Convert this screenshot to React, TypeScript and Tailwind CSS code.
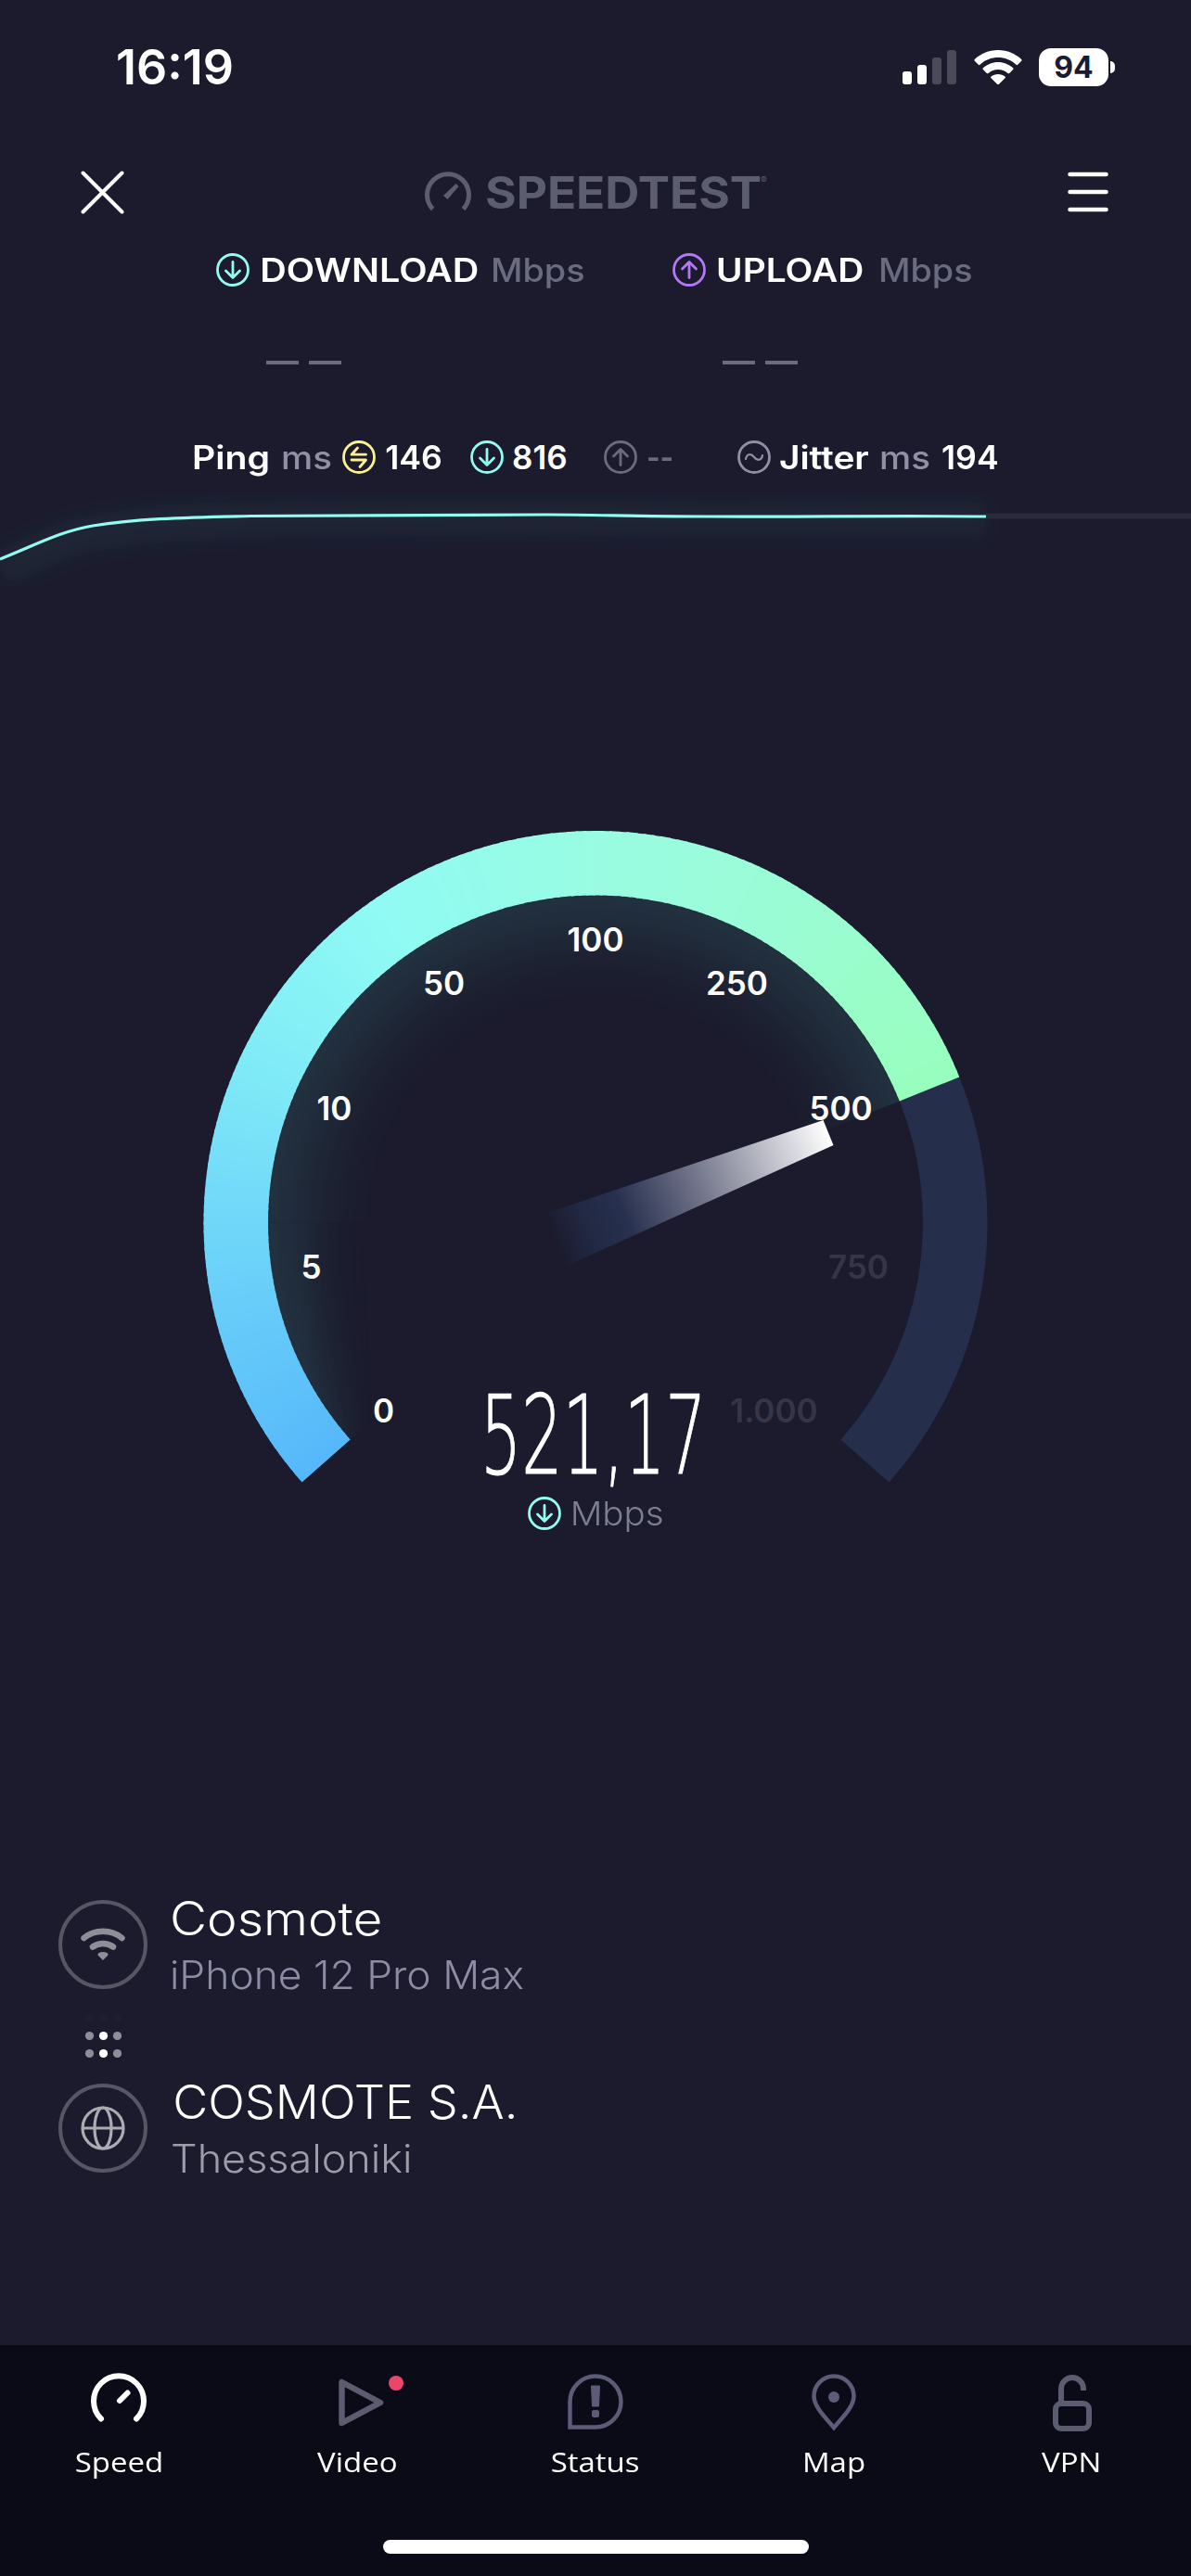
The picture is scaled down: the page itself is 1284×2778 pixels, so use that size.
import React from "react";

const arrowDown = "M18 9.500V26M10.500 19L18 26.500L25.500 19";
const arrowUp = "M18 26.500V10M10.500 17L18 9.500L25.500 17";
const sync = "M16.500 8L10 15.200H25.500M19 28.500L25.500 21H10";
const wave = "M9 20C10 14 15 14 18 18S26 22 27 16";

function RoundIcon({ d, color, w = 2.8 }: { d: string; color: string; w?: number }) {
  return (
    <svg width="36" height="36" viewBox="0 0 36 36" fill="none" stroke={color} strokeLinecap="round" strokeLinejoin="round" className="shrink-0">
      <circle cx="18" cy="18" r="16.500" strokeWidth="2.800" />
      <path d={d} strokeWidth={w} />
    </svg>
  );
}

/* Text with a fixed advance box, so that neighbours stay in place. */
function T({ children, w, className = "", k = 1 }: { children: React.ReactNode; w: number; className?: string; k?: number }) {
  return (
    <span className="block shrink-0 whitespace-nowrap" style={{ width: w }}>
      <span className={"inline-block origin-left " + className} style={{ transform: `scaleX(${k})` }}>{children}</span>
    </span>
  );
}

const CX = 422.5;
const CY = 422.5;
const pt = (r: number, deg: number) => {
  const a = (deg * Math.PI) / 180;
  return `${(CX + r * Math.cos(a)).toFixed(2)} ${(CY - r * Math.sin(a)).toFixed(2)}`;
};
/* Ring sector running clockwise from angle a to angle b (degrees, counter-clockwise positive). */
const sector = (a: number, b: number, r1 = 353, r2 = 422.5) => {
  const big = a - b > 180 ? 1 : 0;
  return `M${pt(r2, a)}A${r2} ${r2} 0 ${big} 1 ${pt(r2, b)}L${pt(r1, b)}A${r1} ${r1} 0 ${big} 0 ${pt(r1, a)}Z`;
};
const START = 221.5;
const VALUE = 21.8;
const END = -41.5;
const stops: [number, number[]][] = [
  [221.5, [86, 184, 250]],
  [180, [112, 215, 249]],
  [155, [128, 235, 247]],
  [125, [144, 251, 244]],
  [90, [153, 252, 226]],
  [60, [154, 252, 213]],
  [21.8, [152, 254, 190]],
];
const colorAt = (a: number) => {
  for (let i = 1; i < stops.length; i++) {
    const [a0, c0] = stops[i - 1];
    const [a1, c1] = stops[i];
    if (a >= a1) {
      const t = (a0 - a) / (a0 - a1);
      return `rgb(${c0.map((v, j) => Math.round(v + (c1[j] - v) * t)).join(",")})`;
    }
  }
  return "rgb(152,254,190)";
};
const N = 160;
const slices = Array.from({ length: N }, (_, i) => {
  const step = (START - VALUE) / N;
  const a = START - i * step;
  return { d: sector(a, Math.max(VALUE, a - step - 0.4)), c: colorAt(a - step / 2) };
});

const marks: { t: string; x: number; y: number; dim?: boolean }[] = [
  { t: "0", x: 413, y: 1521 },
  { t: "5", x: 335, y: 1366 },
  { t: "10", x: 360, y: 1195 },
  { t: "50", x: 478, y: 1060 },
  { t: "100", x: 641.5, y: 1013 },
  { t: "250", x: 794, y: 1060 },
  { t: "500", x: 906, y: 1195 },
  { t: "750", x: 925, y: 1366, dim: true },
  { t: "1.000", x: 834, y: 1521, dim: true },
];

function Gauge() {
  return (
    <div className="relative mx-auto h-[710px] w-[846px]">
      <svg width="846" height="710" viewBox="-0.5 0 846 710" className="block">
        <defs>
          <radialGradient id="glow" gradientUnits="userSpaceOnUse" cx={CX} cy={CY} r="353">
            <stop offset="0.680" stopColor="#3c7f80" stopOpacity="0" />
            <stop offset="0.800" stopColor="#3c7f80" stopOpacity="0.060" />
            <stop offset="0.900" stopColor="#3c7f80" stopOpacity="0.150" />
            <stop offset="1" stopColor="#3c7f80" stopOpacity="0.230" />
          </radialGradient>
          <linearGradient id="fade" gradientUnits="userSpaceOnUse" x1="110" y1="0" x2="180" y2="0">
            <stop offset="0" stopColor="#fff" />
            <stop offset="1" stopColor="#000" />
          </linearGradient>
          <mask id="glowMask" maskUnits="userSpaceOnUse" x="0" y="0" width="846" height="710">
            <rect width="846" height="422.500" fill="#fff" />
            <rect y="422.500" width="846" height="288" fill="url(#fade)" />
          </mask>
          <linearGradient id="needle" gradientUnits="userSpaceOnUse" x1="378" y1="441" x2="674" y2="325">
            <stop offset="0" stopColor="#252f4d" stopOpacity="0" />
            <stop offset="0.130" stopColor="#232d4a" stopOpacity="0.800" />
            <stop offset="0.250" stopColor="#27304f" />
            <stop offset="0.500" stopColor="#6c6f85" />
            <stop offset="1" stopColor="#ffffff" />
          </linearGradient>
        </defs>
        <path d={sector(START, VALUE, 230, 353.500)} fill="url(#glow)" mask="url(#glowMask)" />
        <path d={sector(VALUE, END)} fill="#252e4b" />
        {slices.map((s, i) => (
          <path key={i} d={s.d} fill={s.c} />
        ))}
      </svg>
      {marks.map((m) => (
        <span
          key={m.t}
          className={"absolute -translate-x-1/2 -translate-y-1/2 text-[35px] leading-none font-semibold " + (m.dim ? "text-[#353547]" : "text-white")}
          style={{ left: m.x - 218.500, top: m.y - 896 }}
        >
          {m.t}
        </span>
      ))}
      <svg width="846" height="710" viewBox="-0.5 0 846 710" className="absolute inset-0">
        <path d="M367.500 413L668 312L679 339L389.500 470Z" fill="url(#needle)" />
      </svg>
      <div className="absolute top-[598px] left-[299px] w-[240px] whitespace-nowrap text-white">
        <span className="inline-block origin-left scale-x-[0.595] font-['DejaVu_Sans'] text-[117px] leading-[110px] font-extralight [-webkit-text-stroke:1.2px_#fff]">521,17</span>
      </div>
    </div>
  );
}

const GaugeIcon = () => (
  <svg width="64" height="64" viewBox="0 0 64 64" fill="none" stroke="#fff" strokeWidth="6" strokeLinecap="round">
    <path d="M13 50.500A27 27 0 1 1 51 50.500M33 31L41.500 22.500" />
  </svg>
);
const VideoIcon = () => (
  <div className="relative">
    <svg width="64" height="64" viewBox="0 0 64 64" fill="none" stroke="#5c5c70" strokeWidth="6.500" strokeLinejoin="round">
      <path d="M15.500 11V55L57 33Z" />
    </svg>
    <span className="absolute top-[4px] left-[66px] size-4 rounded-full bg-[#e9476a]" />
  </div>
);
const StatusIcon = () => (
  <svg width="64" height="64" viewBox="0 0 64 64" fill="none">
    <path d="M4.500 59.500V32A27.500 27.500 0 1 1 32 59.500Z" stroke="#5c5c78" strokeWidth="4.500" />
    <path d="M27.500 15H36.500L35.500 37H28.500Z" fill="#5c5c78" stroke="#5c5c78" strokeWidth="1" strokeLinejoin="round" />
    <rect x="28" y="41" width="8" height="8" rx="2" fill="#5c5c78" />
  </svg>
);
const MapIcon = () => (
  <svg width="64" height="64" viewBox="0 0 64 64" fill="none">
    <path d="M32 60C24 50 10.500 38 10.500 26A21.500 21.500 0 0 1 53.500 26C53.500 38 40 50 32 60Z" stroke="#5c5c78" strokeWidth="4.500" />
    <circle cx="32" cy="27" r="6" fill="#5c5c78" />
  </svg>
);
const VpnIcon = () => (
  <svg width="64" height="64" viewBox="0 0 64 64" fill="none" stroke="#5c5c70" strokeWidth="6">
    <rect x="14" y="34" width="36" height="27" rx="6" />
    <path d="M20 34V18A12 12 0 0 1 44 18V20" />
  </svg>
);

const tabs = [
  { label: "Speed", icon: <GaugeIcon /> },
  { label: "Video", icon: <VideoIcon /> },
  { label: "Status", icon: <StatusIcon /> },
  { label: "Map", icon: <MapIcon /> },
  { label: "VPN", icon: <VpnIcon /> },
];

function StatusBar() {
  return (
    <header className="flex h-[160px] items-start pt-[52px] pl-[125px]">
      <div className="w-[848px] text-[52px] leading-[42px] font-semibold">16:19</div>
      <svg width="58" height="42" viewBox="0 0 58 42" className="mr-[19px]">
        <rect x="0" y="25" width="10" height="14" rx="3" fill="#fff" />
        <rect x="16" y="18" width="10" height="21" rx="3" fill="#fff" />
        <rect x="32" y="10" width="10" height="29" rx="3" fill="#4a4a58" />
        <rect x="48" y="2" width="10" height="37" rx="3" fill="#4a4a58" />
      </svg>
      <svg width="52" height="42" viewBox="0 0 52 42" className="mr-[18px]" fill="#fff">
        <path d="M26 2C16 2 7 6 0.800 12Q0 13 0.800 13.800L4.800 17.800Q5.500 18.500 6.500 17.700C12 12.500 19 10 26 10S40 12.500 45.500 17.700Q46.500 18.500 47.200 17.800L51.200 13.800Q52 13 51.200 12C45 6 36 2 26 2Z" />
        <path d="M26 15C20 15 14 17.500 9.800 21.300Q9 22.200 9.800 23L13.800 27Q14.500 27.700 15.500 27C18.500 24.300 22 23 26 23S33.500 24.300 36.500 27Q37.500 27.700 38.200 27L42.200 23Q43 22.200 42.200 21.300C38 17.500 32 15 26 15Z" />
        <path d="M26 28C23 28 20.500 29 18.500 30.500Q17.500 31.400 18.500 32.300L25 38.700Q26 39.500 27 38.700L33.500 32.300Q34.500 31.400 33.500 30.500C31.500 29 29 28 26 28Z" />
      </svg>
      <div className="flex h-[41px] w-[75px] items-center justify-center rounded-[13px] bg-white text-[32px] leading-none font-bold text-[#1b1b2d]">94</div>
      <span className="mt-[14px] ml-[2px] h-[13px] w-[5px] rounded-r-full bg-white" />
    </header>
  );
}

function Host({ title, sub, subClass, icon }: { title: React.ReactNode; sub: React.ReactNode; subClass: string; icon: React.ReactNode }) {
  return (
    <div className="flex h-[104px]">
      <div className="mt-1 mr-[24px] flex size-24 shrink-0 items-center justify-center rounded-full border-4 border-[#565665]">{icon}</div>
      <div>
        <div className="h-[64px] text-[50px] leading-[49px] font-light text-white">{title}</div>
        <div className={"text-[42px] leading-[42px] font-light " + subClass}>{sub}</div>
      </div>
    </div>
  );
}

export default function App() {
  return (
    <div className="flex h-[2778px] w-[1284px] flex-col overflow-hidden bg-[#1b1b2d] font-['Inter',sans-serif] text-white">
      <StatusBar />
      <div className="flex h-[94px] items-center pr-[89px] pl-[87px]">
        <svg width="47" height="47" viewBox="0 0 47 47" stroke="#fff" strokeWidth="4" strokeLinecap="round">
          <path d="M2.500 2.500L44.500 44.500M44.500 2.500L2.500 44.500" />
        </svg>
        <svg width="50" height="44" viewBox="0 0 50 44" className="ml-[324px]" fill="none" stroke="#5d5d70" strokeWidth="5">
          <path d="M8.500 40.500A22.500 22.500 0 1 1 41.500 40.500" />
          <path d="M20 26L33.500 13L36.500 16L24.500 30Z" fill="#5d5d70" stroke="none" />
        </svg>
        <div className="mt-[2px] ml-[15px] flex w-[628px] items-start text-[#5d5d70]">
          <T w={297} className="text-[48px] leading-[50px] font-bold" k={1.07}>SPEEDTEST</T>
          <span className="mt-1 text-[10px] leading-[14px]">®</span>
        </div>
        <svg width="44" height="44" viewBox="0 0 44 44" stroke="#fff" strokeWidth="4.500" strokeLinecap="round">
          <path d="M2.500 3H41.500M2.500 22H41.500M2.500 41H41.500" />
        </svg>
      </div>

      <div className="flex h-[74px] items-center pl-[233px] text-[35px] leading-[44px] font-semibold">
        <RoundIcon d={arrowDown} color="#93fbf0" />
        <T w={260} className="pl-[10px]" k={1.13}>DOWNLOAD</T>
        <T w={196} className="font-medium text-[#6b6b80]" k={1.08}>Mbps</T>
        <RoundIcon d={arrowUp} color="#b477f8" />
        <T w={186} className="pl-[10px]" k={1.11}>UPLOAD</T>
        <T w={110} className="font-medium text-[#6b6b80]" k={1.08}>Mbps</T>
      </div>
      <div className="flex h-[124px] pt-[61px] pl-[287px]">
        {[0, 1].map((i) => (
          <div key={i} className="flex w-[492px] gap-[11px]">
            <span className="h-1 w-[35px] bg-[#6b6b80]" />
            <span className="h-1 w-[35px] bg-[#6b6b80]" />
          </div>
        ))}
      </div>
      <div className="flex h-[80px] items-center pt-px pl-[207px] text-[35px] leading-[44px] font-semibold">
        <T w={96} k={1.12}>Ping</T>
        <T w={66} className="font-medium text-[#8f8fa5]" k={1.1}>ms</T>
        <RoundIcon d={sync} color="#fcf08f" />
        <T w={102} className="pl-[10px]" k={1.02}>146</T>
        <RoundIcon d={arrowDown} color="#93fbf0" />
        <T w={108} className="pl-[9px]">816</T>
        <RoundIcon d={arrowUp} color="#6b6b80" />
        <T w={108} className="pl-[11px] text-[#6b6b80]" k={0.9}>--</T>
        <RoundIcon d={wave} color="#8f8fa5" w={2.2} />
        <T w={117} className="pl-[8px]" k={1.11}>Jitter</T>
        <T w={67} className="font-medium text-[#8f8fa5]" k={1.1}>ms</T>
        <T w={70} k={1.02}>194</T>
      </div>

      <svg width="1284" height="100" viewBox="0 0 1284 100" className="block shrink-0" fill="none">
        <defs>
          <filter id="soft" x="-10%" y="-100%" width="120%" height="300%">
            <feGaussianBlur stdDeviation="11" />
          </filter>
        </defs>
        <path d="M0 82C40 65 65 50 100 43C145 35 190 30 287 28C390 28 450 26 590 26C660 27 690 28 760 28C860 28 960 27 1063 28" stroke="#3c7f80" strokeOpacity="0.110" strokeWidth="38" filter="url(#soft)" />
        <path d="M1063 24.500H1284" stroke="#2b2b3c" strokeWidth="6" />
        <path d="M0 71C40 55 65 41 100 35C145 28 190 26 270 24.500C390 24.500 450 23 590 23C640 23 690 25 760 25C860 25.500 960 24 1063 25" stroke="#93fbf0" strokeWidth="3.200" />
      </svg>

      <div className="mt-[264px]">
        <Gauge />
      </div>
      <div className="mt-[4px] flex h-[44px] items-center pl-[569px] text-[36px] leading-[44px] font-light text-[#7b7f90]">
        <RoundIcon d={arrowDown} color="#93fbf0" />
        <T w={110} className="pl-[9px]" k={1.07}>Mbps</T>
      </div>

      <div className="mt-[391px] pl-[63px]">
        <Host
          title={<T w={300} k={1.1}>Cosmote</T>}
          sub={<T w={400} k={1.057}>iPhone 12 Pro Max</T>}
          subClass="text-[#8c8ca5]"
          icon={
            <svg width="48" height="36" viewBox="0 0 48 36" fill="none" stroke="#8e8e99" strokeWidth="6.500" strokeLinecap="round">
              <path d="M3.500 11A33 33 0 0 1 44.500 11M13 20.500A19 19 0 0 1 35 20.500" />
              <path d="M24 35L18.500 29.500Q18 26 24 26T29.500 29.500Z" fill="#8e8e99" stroke="none" />
            </svg>
          }
        />
        <svg width="40" height="60" viewBox="0 0 40 60" className="mt-[22px] mb-[12px] ml-[28px] block">
          {[6, 25, 44].map((y, r) =>
            [5.5, 20.5, 35.500].map((x, c) => (
              <circle key={x + "-" + y} cx={x} cy={y - 0.500} r="4.600" fill={r === 0 ? "#1e1e2f" : c === 1 ? "#fff" : "#8e8e99"} />
            )),
          )}
        </svg>
        <Host
          title={<T w={400} className="pl-[3px]" k={1.045}>COSMOTE S.A.</T>}
          sub={<T w={300} className="pl-px" k={1.07}>Thessaloniki</T>}
          subClass="text-[#9d9daa]"
          icon={
            <svg width="48" height="48" viewBox="0 0 48 48" fill="none" stroke="#ababb2" strokeWidth="3.200">
              <circle cx="24" cy="24" r="22" />
              <ellipse cx="24" cy="24" rx="9" ry="22" />
              <path d="M2 24H46" />
            </svg>
          }
        />
      </div>

      <footer className="mt-auto h-[249px] shrink-0 bg-[#0a0b17] pt-[29px]">
        <nav className="grid grid-cols-5">
          {tabs.map((t) => (
            <div key={t.label} className="flex flex-col items-center">
              {t.icon}
              <span className="mt-[13px] mb-px scale-x-[1.1] font-['Open_Sans'] text-[30px] leading-[40px]">{t.label}</span>
            </div>
          ))}
        </nav>
        <div className="mx-auto mt-[63px] h-[15px] w-[459px] rounded-full bg-white" />
      </footer>
    </div>
  );
}
